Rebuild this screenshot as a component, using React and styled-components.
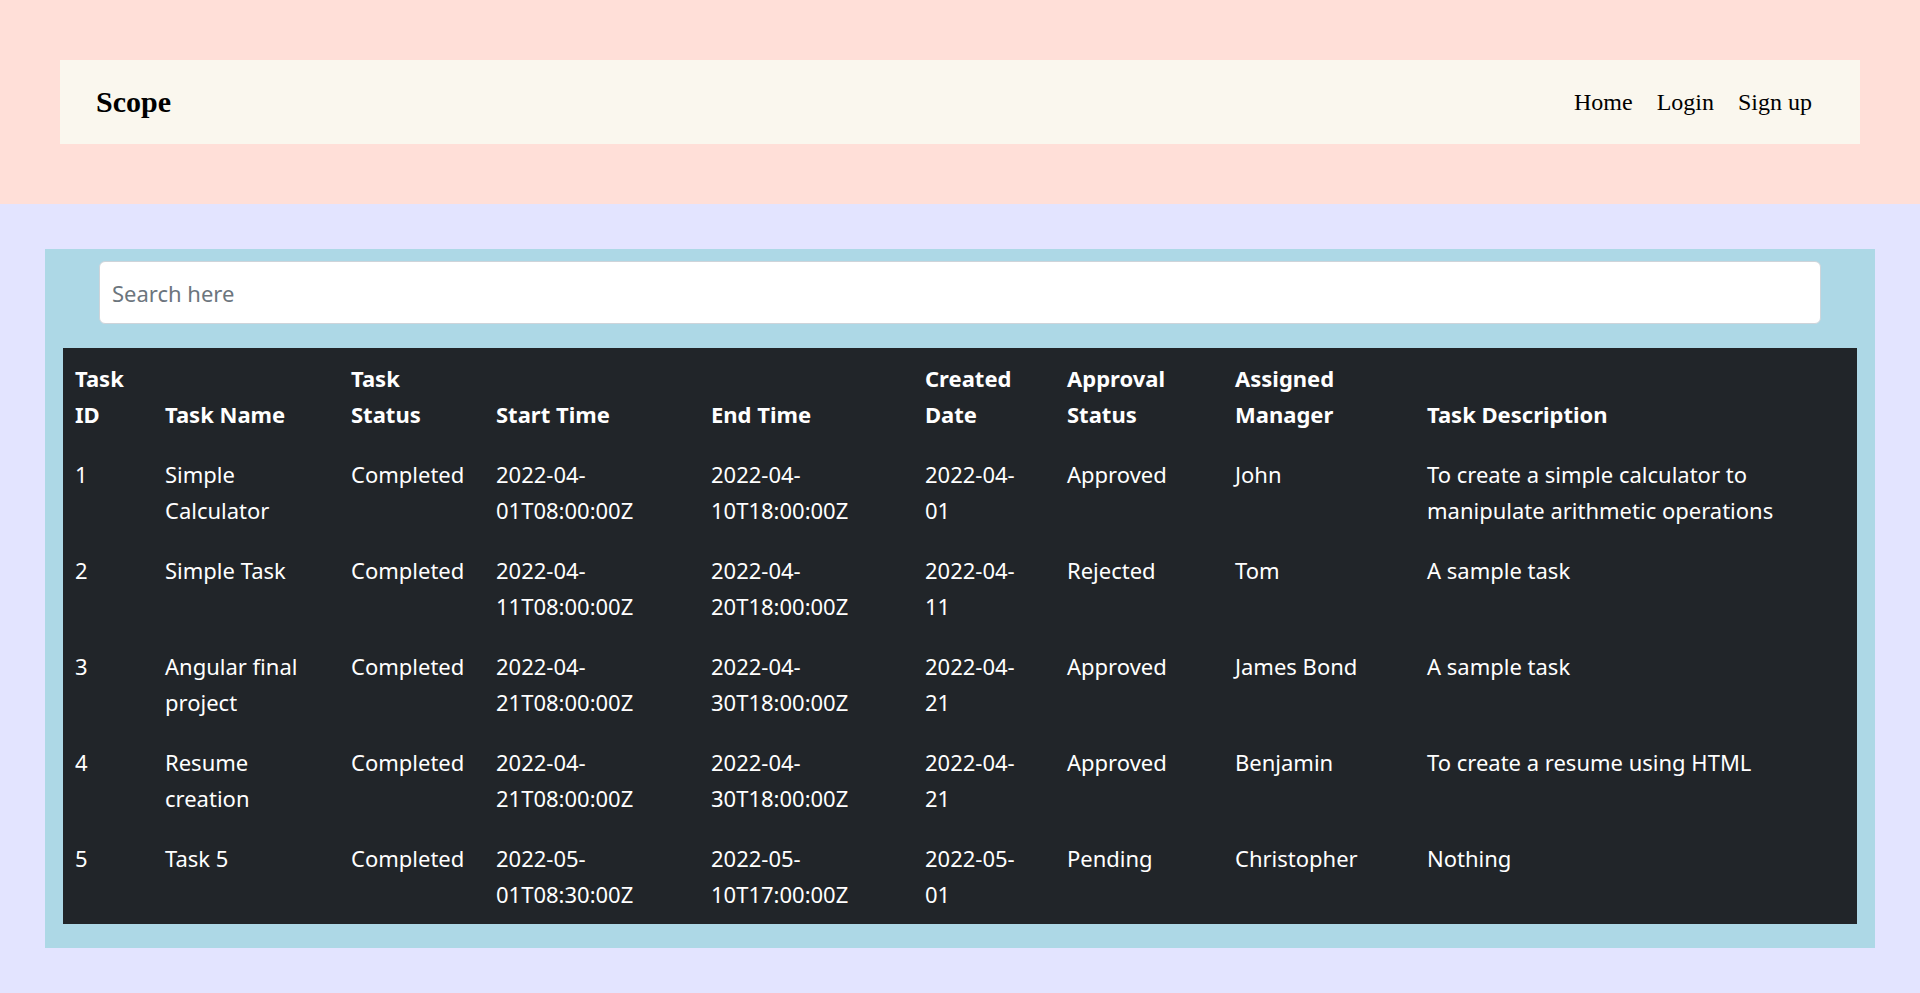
import React, { useState } from "react";
import styled, { createGlobalStyle } from "styled-components";

const GlobalStyle = createGlobalStyle`
  *, *::before, *::after { box-sizing: border-box; }
  body {
    margin: 0;
    background: #e3e4ff;
    color: #212529;
    font-family: "Segoe UI", "Noto Sans", "Open Sans", sans-serif;
    font-size: 22px;
    line-height: 36px;
  }
`;

const Header = styled.header`
  padding: 60px;
  background: #ffdfd8;
  font-family: "Liberation Serif", "Times New Roman", serif;
`;

const NavBar = styled.nav`
  display: flex;
  align-items: center;
  justify-content: space-between;
  padding: 24px 48px 24px 36px;
  background: #faf7ee;
`;

const Brand = styled.a`
  color: #000;
  font-size: 30px;
  font-weight: 700;
  text-decoration: none;
`;

const NavLinks = styled.div`
  display: flex;
  gap: 24px;
`;

const NavLink = styled.a`
  color: #000;
  font-size: 24px;
  text-decoration: none;
`;

const Main = styled.main`
  padding: 45px;
`;

const Panel = styled.section`
  display: flex;
  flex-direction: column;
  gap: 24px;
  padding: 12px 18px 24px;
  background: #add8e6;
`;

const SearchRow = styled.div`
  display: flex;
  padding: 0 36px;
`;

const SearchInput = styled.input`
  flex: 1;
  min-width: 0;
  height: 63px;
  padding: 0 12px;
  border: 1px solid #ced4da;
  border-radius: 6px;
  background: #fff;
  color: #212529;
  font: inherit;

  &::placeholder {
    color: #6c757d;
    opacity: 1;
  }
`;

const TaskTable = styled.table`
  width: 100%;
  table-layout: fixed;
  border-collapse: collapse;
  background: #212529;
  color: #fff;
`;

const Column = styled.col`
  width: ${({ $width }) => ($width ? `${$width}px` : "auto")};
`;

const HeadCell = styled.th`
  padding: 12px;
  font-weight: 700;
  text-align: left;
  vertical-align: bottom;
`;

const Cell = styled.td`
  padding: 12px ${({ $narrow }) => ($narrow ? 24 : 12)}px 12px 12px;
  vertical-align: top;
`;

const columns = [
  { key: "id", label: "Task ID", width: 90 },
  { key: "name", label: "Task Name", width: 186 },
  { key: "status", label: "Task Status", width: 145 },
  { key: "start", label: "Start Time", width: 215 },
  { key: "end", label: "End Time", width: 214 },
  { key: "created", label: "Created Date", width: 142, narrow: true },
  { key: "approval", label: "Approval Status", width: 168 },
  { key: "manager", label: "Assigned Manager", width: 192 },
  { key: "description", label: "Task Description" },
];

const tasks = [
  { id: 1, name: "Simple Calculator", status: "Completed", start: "2022-04-01T08:00:00Z", end: "2022-04-10T18:00:00Z", created: "2022-04-01", approval: "Approved", manager: "John", description: "To create a simple calculator to manipulate arithmetic operations" },
  { id: 2, name: "Simple Task", status: "Completed", start: "2022-04-11T08:00:00Z", end: "2022-04-20T18:00:00Z", created: "2022-04-11", approval: "Rejected", manager: "Tom", description: "A sample task" },
  { id: 3, name: "Angular final project", status: "Completed", start: "2022-04-21T08:00:00Z", end: "2022-04-30T18:00:00Z", created: "2022-04-21", approval: "Approved", manager: "James Bond", description: "A sample task" },
  { id: 4, name: "Resume creation", status: "Completed", start: "2022-04-21T08:00:00Z", end: "2022-04-30T18:00:00Z", created: "2022-04-21", approval: "Approved", manager: "Benjamin", description: "To create a resume using HTML" },
  { id: 5, name: "Task 5", status: "Completed", start: "2022-05-01T08:30:00Z", end: "2022-05-10T17:00:00Z", created: "2022-05-01", approval: "Pending", manager: "Christopher", description: "Nothing" },
];

export default function App() {
  const [query, setQuery] = useState("");
  const needle = query.trim().toLowerCase();
  const visible = tasks.filter((task) =>
    Object.values(task).some((value) => String(value).toLowerCase().includes(needle))
  );

  return (
    <>
      <GlobalStyle />
      <Header>
        <NavBar>
          <Brand href="#">Scope</Brand>
          <NavLinks>
            <NavLink href="#home">Home</NavLink>
            <NavLink href="#login">Login</NavLink>
            <NavLink href="#signup">Sign up</NavLink>
          </NavLinks>
        </NavBar>
      </Header>
      <Main>
        <Panel>
          <SearchRow>
            <SearchInput
              type="text"
              aria-label="Search here"
              placeholder="Search here"
              value={query}
              onChange={(event) => setQuery(event.target.value)}
            />
          </SearchRow>
          <TaskTable>
            <colgroup>
              {columns.map((column) => (
                <Column key={column.key} $width={column.width} />
              ))}
            </colgroup>
            <thead>
              <tr>
                {columns.map((column) => (
                  <HeadCell key={column.key} scope="col">{column.label}</HeadCell>
                ))}
              </tr>
            </thead>
            <tbody>
              {visible.map((task) => (
                <tr key={task.id}>
                  {columns.map((column) => (
                    <Cell key={column.key} $narrow={column.narrow}>{task[column.key]}</Cell>
                  ))}
                </tr>
              ))}
            </tbody>
          </TaskTable>
        </Panel>
      </Main>
    </>
  );
}
